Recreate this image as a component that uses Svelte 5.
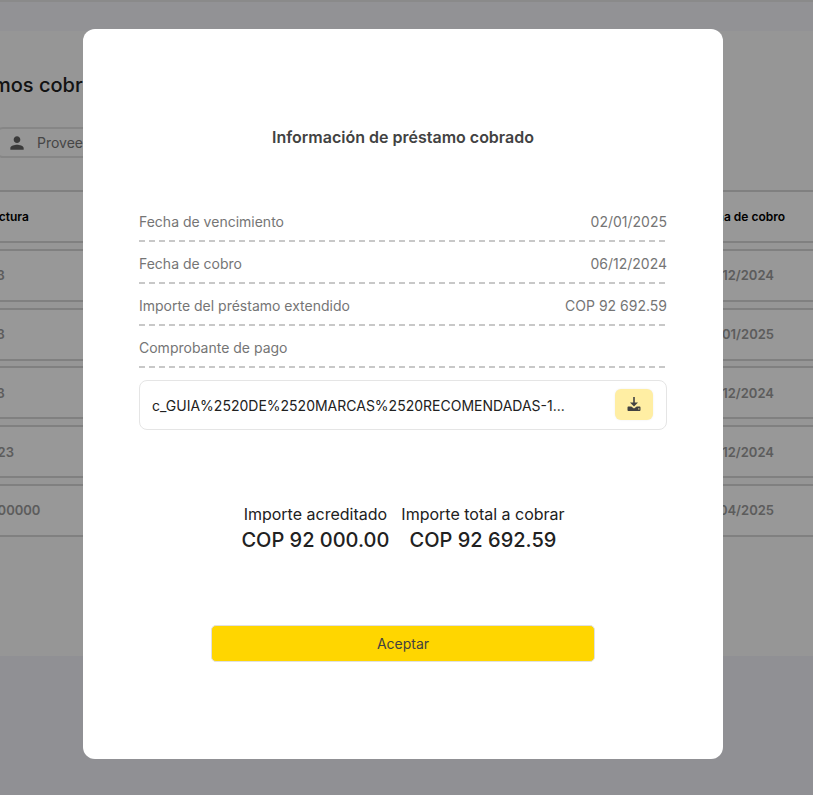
<script>
  const rows = [
    { invoice: 'F-000223', due: '02/12/2024' },
    { invoice: 'F-000223', due: '15/01/2025' },
    { invoice: 'F-000223', due: '06/12/2024' },
    { invoice: 'F-0000023', due: '06/12/2024' },
    { invoice: 'F-0000000000', due: '11/04/2025' }
  ];

  const details = [
    { label: 'Fecha de vencimiento', value: '02/01/2025' },
    { label: 'Fecha de cobro', value: '06/12/2024' },
    { label: 'Importe del préstamo extendido', value: 'COP 92 692.59' },
    { label: 'Comprobante de pago', value: '' }
  ];

  const totals = [
    { label: 'Importe acreditado', value: 'COP 92 000.00' },
    { label: 'Importe total a cobrar', value: 'COP 92 692.59' }
  ];
</script>

<div class="page">
  <header class="topbar"></header>
  <section class="content">
    <h1>Préstamos cobrados</h1>
    <div class="filter">
      <svg viewBox="0 0 24 24" width="20" height="20" aria-hidden="true">
        <path d="M12 12c2.200 0 4-1.800 4-4s-1.800-4-4-4-4 1.800-4 4 1.800 4 4 4zm0 2c-2.700 0-8 1.300-8 4v2h16v-2c0-2.700-5.300-4-8-4z" />
      </svg>
      <span>Proveedor</span>
    </div>
    <div class="table">
      <div class="row head">
        <span>Nº de factura</span>
        <span>Fecha de cobro</span>
      </div>
      {#each rows as row}
        <div class="row">
          <span>{row.invoice}</span>
          <span>{row.due}</span>
        </div>
      {/each}
    </div>
  </section>
</div>

<div class="overlay">
  <div class="modal">
    <h2>Información de préstamo cobrado</h2>

    <div class="details">
      {#each details as item}
        <div class="detail">
          <span>{item.label}</span>
          <span>{item.value}</span>
        </div>
      {/each}
    </div>

    <div class="file">
      <span class="file-name">c_GUIA%2520DE%2520MARCAS%2520RECOMENDADAS-1...</span>
      <button class="download" aria-label="Descargar">
        <svg viewBox="0 0 16 16" width="16" height="16" fill="#424242" aria-hidden="true">
          <path d="M7.200 1h1.600v5.500H12L8 10.500 4 6.500h3.200z" />
          <path d="M2.500 10.500h2.800L8 12.500l2.700-2h2.800c.6 0 1 .5 1 1v2.500c0 .5-.4 1-1 1h-11c-.6 0-1-.5-1-1v-2.500c0-.5.4-1 1-1z" />
          <circle cx="12.800" cy="12.900" r="0.700" fill="#ffeea3" />
        </svg>
      </button>
    </div>

    <div class="totals">
      {#each totals as total}
        <div class="total">
          <span class="total-label">{total.label}</span>
          <span class="total-value">{total.value}</span>
        </div>
      {/each}
    </div>

    <button class="accept">Aceptar</button>
  </div>
</div>

<style>
  :global(body) {
    margin: 0;
    background-color: #f0f1f7;
    font-family: Inter, 'Noto Sans', sans-serif;
    overflow: hidden;
  }

  .page {
    height: 795px;
    overflow: hidden;
  }

  .topbar {
    height: 31px;
    box-sizing: border-box;
    border-top: 2px solid #e6e6e6;
    background-color: #f3f4f9;
  }

  .content {
    height: 625px;
    box-sizing: border-box;
    background-color: #fafafa;
    padding-top: 40px;
    overflow: hidden;
  }

  h1 {
    margin: 0 0 0 -68px;
    font-size: 20px;
    line-height: 28px;
    font-weight: 500;
    color: #212121;
    white-space: nowrap;
  }

  .filter {
    display: flex;
    align-items: center;
    gap: 10px;
    width: 300px;
    height: 31px;
    margin: 28px 0 0 -5px;
    padding-left: 10px;
    box-sizing: border-box;
    border: 2px solid #e0e0e0;
    border-radius: 8px;
    font-size: 14px;
    color: #757575;
  }

  .filter svg {
    fill: #616161;
  }

  .table {
    display: flex;
    flex-direction: column;
    gap: 5.75px;
    margin-top: 32px;
  }

  .row {
    display: flex;
    justify-content: space-between;
    align-items: center;
    height: 53px;
    padding-right: 39px;
    box-sizing: border-box;
    background-color: #fdfdfd;
    border-top: 2px solid #d6d6d6;
    border-bottom: 2px solid #d6d6d6;
    font-size: 13px;
    font-weight: 600;
    color: #9a9a9a;
    white-space: nowrap;
  }

  .row span:first-child {
    margin-left: -59px;
  }

  .head {
    padding-right: 28px;
    font-size: 12px;
    color: #000;
  }

  .row.head {
    color: #000;
  }

  .row.head span:first-child {
    margin-left: -48px;
  }

  .overlay {
    position: fixed;
    inset: 0;
    background-color: rgba(0, 0, 0, 0.4);
  }

  .modal {
    position: absolute;
    top: 29px;
    left: 83px;
    width: 640px;
    height: 730px;
    box-sizing: border-box;
    padding: 98px 56px 0;
    display: flex;
    flex-direction: column;
    background-color: #fff;
    border-radius: 12px;
  }

  h2 {
    margin: 0;
    font-size: 16px;
    line-height: 20px;
    font-weight: 600;
    color: #424242;
    text-align: center;
  }

  .details {
    margin-top: 53px;
  }

  .detail {
    display: flex;
    justify-content: space-between;
    height: 42px;
    box-sizing: border-box;
    padding-top: 13px;
    background-image: linear-gradient(to right, #c8c8c8 6px, transparent 6px);
    background-size: 10px 2px;
    background-repeat: repeat-x;
    background-position: left bottom;
    font-size: 14px;
    line-height: 18px;
    color: #757575;
  }

  .file {
    display: flex;
    justify-content: space-between;
    align-items: center;
    height: 50px;
    margin-top: 12px;
    padding: 0 13px 2px 12px;
    box-sizing: border-box;
    border: 1px solid #e5e5e5;
    border-radius: 8px;
    font-size: 14px;
    color: #212121;
  }

  .file-name {
    padding-top: 2px;
  }

  .download {
    display: flex;
    align-items: center;
    justify-content: center;
    width: 38px;
    height: 31px;
    padding: 0;
    border: none;
    border-radius: 6px;
    background-color: #ffeea3;
    box-shadow: 0 0 2px rgba(0, 0, 0, 0.08);
  }

  .totals {
    display: flex;
    justify-content: center;
    gap: 12px;
    margin-top: 74px;
  }

  .total {
    display: flex;
    flex-direction: column;
    align-items: center;
    color: #212121;
  }

  .total-label {
    font-size: 16px;
    line-height: 20px;
  }

  .total-value {
    margin-top: 2px;
    font-size: 20px;
    line-height: 28px;
    font-weight: 500;
  }

  .accept {
    align-self: center;
    width: 384px;
    height: 37px;
    margin-top: 71px;
    border: 1px solid #e0e0e0;
    border-radius: 5px;
    background-color: #ffd600;
    font-family: inherit;
    font-size: 14px;
    color: #424242;
  }
</style>
